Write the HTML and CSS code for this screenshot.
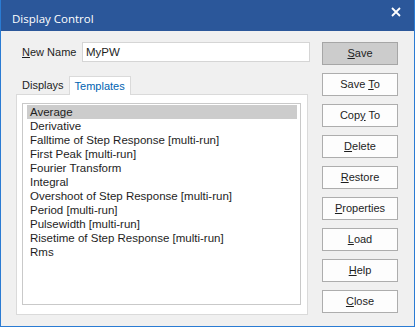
FILE: index.html
```html
<!DOCTYPE html>
<html lang="en">
<head>
    <meta charset="UTF-8">
    <title>Display Control</title>
    <link rel="stylesheet" href="styles.css">
</head>
<body>

<div class="window">
    <!-- Title bar -->
    <div class="titleBar">
        <span class="titleText">Display Control</span>
        <svg class="closeIcon" width="10" height="10" viewBox="0 0 10 10">
            <path d="M1 1 L9 9 M9 1 L1 9" stroke="#ffffff" stroke-width="1.8" fill="none"/>
        </svg>
    </div>

    <div class="content">
        <div class="leftCol">
            <div class="nameRow">
                <label class="nameLabel"><u>N</u>ew Name</label>
                <div class="nameInput">MyPW</div>
            </div>

            <div class="tabs">
                <span class="tab">Displays</span>
                <span class="tab active">Templates</span>
            </div>

            <div class="tabPanel">
                <div class="listBox">
                    <div class="item selected">Average</div>
                    <div class="item">Derivative</div>
                    <div class="item">Falltime of Step Response [multi-run]</div>
                    <div class="item">First Peak [multi-run]</div>
                    <div class="item">Fourier Transform</div>
                    <div class="item">Integral</div>
                    <div class="item">Overshoot of Step Response [multi-run]</div>
                    <div class="item">Period [multi-run]</div>
                    <div class="item">Pulsewidth [multi-run]</div>
                    <div class="item">Risetime of Step Response [multi-run]</div>
                    <div class="item">Rms</div>
                </div>
            </div>
        </div>

        <div class="buttons">
            <div class="btn default"><u>S</u>ave</div>
            <div class="btn">Save <u>T</u>o</div>
            <div class="btn">Cop<u>y</u> To</div>
            <div class="btn"><u>D</u>elete</div>
            <div class="btn"><u>R</u>estore</div>
            <div class="btn"><u>P</u>roperties</div>
            <div class="btn"><u>L</u>oad</div>
            <div class="btn"><u>H</u>elp</div>
            <div class="btn"><u>C</u>lose</div>
        </div>
    </div>
</div>

</body>
</html>
```

FILE: styles.css
```css
/* Whole dialog */
body {
    margin: 0;
    font-family: "Liberation Sans", Arial, sans-serif;
    font-size: 11px;
    color: #1e1e1e;
}

.window {
    width: 415px;
    height: 327px;
    box-sizing: border-box;
    background: #f0f0f0;
    border: 1px solid #2a7bd3;
    border-top: 0;
}

/* Title bar */
.titleBar {
    height: 31px;
    background: #2b579a;
    display: flex;
    align-items: center;
    justify-content: space-between;
    padding: 0 13px 0 11px;
    color: #ffffff;
}

.titleText {
    font-family: "Open Sans", "Noto Sans", sans-serif;
    font-size: 11.5px;
    margin-top: 5px;
}

.closeIcon {
    margin-top: -8px;
}

/* Main area */
.content {
    display: flex;
    padding: 11px 0 0 15px;
}

.leftCol {
    width: 292px;
}

.nameRow {
    display: flex;
    align-items: center;
    padding-left: 6px;
    height: 20px;
}

.nameLabel {
    width: 60px;
    flex-shrink: 0;
    white-space: nowrap;
}

.nameInput {
    width: 228px;
    height: 20px;
    flex-shrink: 0;
    box-sizing: border-box;
    border: 1px solid #d5d5d5;
    background: #ffffff;
    padding: 1px 3px;
    line-height: 16px;
    font-size: 11.5px;
}

/* Tabs */
.tabs {
    display: flex;
    margin-top: 14px;
    height: 18px;
    padding-left: 6px;
}

.tab {
    line-height: 18px;
    padding-right: 5px;
}

.tab.active {
    box-sizing: border-box;
    height: 19px;
    padding: 0 5px;
    background: #ffffff;
    border: 1px solid #dadada;
    border-bottom: 0;
    color: #0063b1;
    position: relative;
    z-index: 1;
}

.tabPanel {
    height: 221px;
    box-sizing: border-box;
    border: 1px solid #dadada;
    background: #ffffff;
    padding: 8px 0 0 5px;
}

/* List of templates */
.listBox {
    width: 279px;
    height: 202px;
    box-sizing: border-box;
    border: 1px solid #c9c9c9;
    padding: 1px 0 0 4px;
}

.item {
    width: 270px;
    height: 14px;
    line-height: 14px;
    padding-left: 3px;
    box-sizing: border-box;
    white-space: nowrap;
    font-size: 11.5px;
}

.item.selected {
    background: #cccccc;
}

/* Buttons on the right */
.buttons {
    display: flex;
    flex-direction: column;
    gap: 8px;
    margin-left: 14px;
}

.btn {
    width: 76px;
    height: 23px;
    box-sizing: border-box;
    border: 1px solid #adadad;
    background: #fdfdfd;
    text-align: center;
    line-height: 21px;
}

.btn.default {
    background: #cccccc;
    border-color: #a6a6a6;
}
```
